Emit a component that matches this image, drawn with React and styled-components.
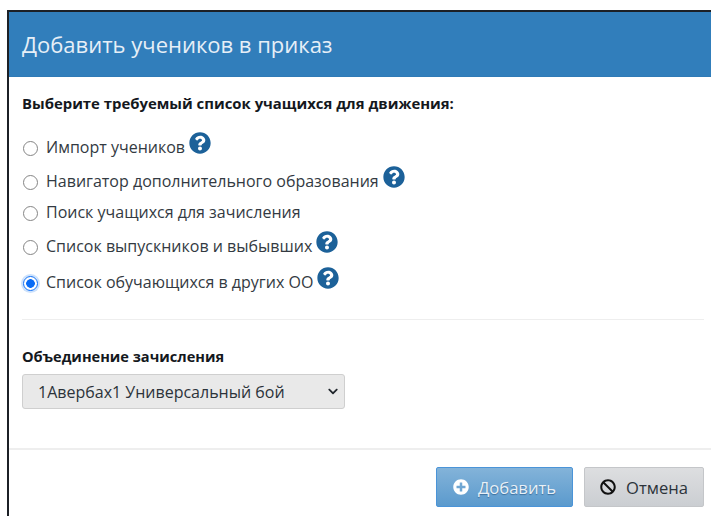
import React, { useState } from 'react';
import styled, { createGlobalStyle } from 'styled-components';
import { FaQuestionCircle, FaBan, FaPlusCircle, FaChevronDown } from 'react-icons/fa';

const GlobalStyle = createGlobalStyle`
  html, body {
    margin: 0;
    background: #fff;
    overflow: hidden;
  }
  body {
    font-family: "Open Sans", "Liberation Sans", sans-serif;
  }
`

const Page = styled.div`
  width: 711px;
  height: 516px;
  padding: 10px 0 0 7px;
  box-sizing: border-box;
  overflow: hidden;
`

const Modal = styled.div`
  width: 704px;
  height: 506px;
  box-sizing: border-box;
  border-top: 2px solid #1c2026;
  border-left: 2px solid #1c2026;
  background: #fff;
  display: flex;
  flex-direction: column;
`

const Header = styled.div`
  height: 65px;
  flex: none;
  box-sizing: border-box;
  padding-left: 13px;
  display: flex;
  align-items: center;
  background: #317ebb;
  border-bottom: 1px solid #2f7ab6;
`

const Title = styled.h4`
  margin: 0;
  font-size: 22px;
  font-weight: 400;
  color: #e6eff7;
`

const Body = styled.div`
  height: 373px;
  flex: none;
  box-sizing: border-box;
  padding: 16px 7px 0 13px;
  border-bottom: 2px solid #eeeeee;
`

const Heading = styled.div`
  font-size: 14.9px;
  font-weight: 700;
  line-height: 20px;
  color: #14181d;
`

const RadioList = styled.div`
  margin-top: 17px;
  display: flex;
  flex-direction: column;
  padding-bottom: 21px;
  border-bottom: 1px solid #eeeeee;
`

const Row = styled.label`
  height: ${(p) => p.$height}px;
  display: flex;
  align-items: center;
  font-size: 16px;
  color: #333a42;
  cursor: pointer;
`

const Radio = styled.input`
  appearance: none;
  width: 15px;
  height: 15px;
  margin: 2px 8px 0 1px;
  flex: none;
  box-sizing: border-box;
  border: 1.5px solid #858585;
  border-radius: 50%;
  background: #fff;

  &:checked {
    border: 1.5px solid #0a6cf5;
    background: radial-gradient(circle, #0a6cf5 0 4px, #fff 4.6px);
    box-shadow: 0 0 0 2px rgba(90, 160, 245, 0.3);
  }
`

const Help = styled(FaQuestionCircle)`
  width: 22px;
  height: 22px;
  margin: 0 0 9px 4px;
  color: #1c6199;
  flex: none;
`

const Label = styled.div`
  margin-top: 26px;
  font-size: 14.6px;
  font-weight: 700;
  line-height: 20px;
  color: #14181d;
`

const SelectBox = styled.div`
  position: relative;
  width: 323px;
  height: 35px;
  margin-top: 8px;

  svg {
    position: absolute;
    top: 12px;
    right: 6px;
    width: 12px;
    height: 11px;
    color: #20262c;
    pointer-events: none;
  }
`

const Select = styled.select`
  display: block;
  width: 100%;
  height: 100%;
  padding: 0 11px 0 15px;
  box-sizing: border-box;
  appearance: none;
  font-family: inherit;
  font-size: 16px;
  color: #2c333a;
  background: #e9e9e9;
  border: 1px solid #cfcfcf;
  border-radius: 3px;
`

const Footer = styled.div`
  flex: 1;
  display: flex;
  justify-content: flex-end;
  gap: 11px;
  padding: 17px 7px 0 0;
`

const Button = styled.button`
  height: 40px;
  width: ${(p) => p.$width}px;
  box-sizing: border-box;
  display: flex;
  align-items: center;
  justify-content: center;
  gap: ${(p) => p.$gap}px;
  font-family: inherit;
  font-size: 16.6px;
  border-radius: 2px;
  cursor: pointer;
  color: ${(p) => (p.$primary ? '#e8f0f7' : '#2c333a')};
  background: ${(p) =>
    p.$primary
      ? 'linear-gradient(#83b3d9, #5b9acd)'
      : 'linear-gradient(#dddee0, #cbced2)'};
  border: 1px solid ${(p) => (p.$primary ? '#4a94d8' : '#c4c6c9')};
  text-shadow: ${(p) => (p.$primary ? '0 1px 1px #3d6f9c' : 'none')};

  svg {
    width: 16px;
    height: 16px;
    color: ${(p) => (p.$primary ? '#fff' : '#111')};
    flex: none;
  }
`

const sources = [
  { id: 'import', title: 'Импорт учеников', help: true, height: 34 },
  { id: 'navigator', title: 'Навигатор дополнительного образования', help: true, height: 34 },
  { id: 'search', title: 'Поиск учащихся для зачисления', help: false, height: 28 },
  { id: 'graduates', title: 'Список выпускников и выбывших', help: true, height: 40 },
  { id: 'others', title: 'Список обучающихся в других ОО', help: true, height: 32 },
]

const App = () => {
  const [source, setSource] = useState('others')

  return (
    <Page>
      <GlobalStyle />
      <Modal>
        <Header>
          <Title>Добавить учеников в приказ</Title>
        </Header>
        <Body>
          <Heading>Выберите требуемый список учащихся для движения:</Heading>
          <RadioList>
            { sources.map((item) => (
              <Row key={item.id} $height={item.height}>
                <Radio
                  type="radio"
                  name="source"
                  checked={source === item.id}
                  onChange={() => setSource(item.id)}
                />
                {item.title}
                { item.help && <Help /> }
              </Row>
            )) }
          </RadioList>
          <Label>Объединение зачисления</Label>
          <SelectBox>
            <Select defaultValue="1">
              <option value="1">1Авербах1 Универсальный бой</option>
            </Select>
            <FaChevronDown />
          </SelectBox>
        </Body>
        <Footer>
          <Button $primary $width={137} $gap={9}><FaPlusCircle /> Добавить</Button>
          <Button $width={120} $gap={10}><FaBan /> Отмена</Button>
        </Footer>
      </Modal>
    </Page>
  )
}

export default App
